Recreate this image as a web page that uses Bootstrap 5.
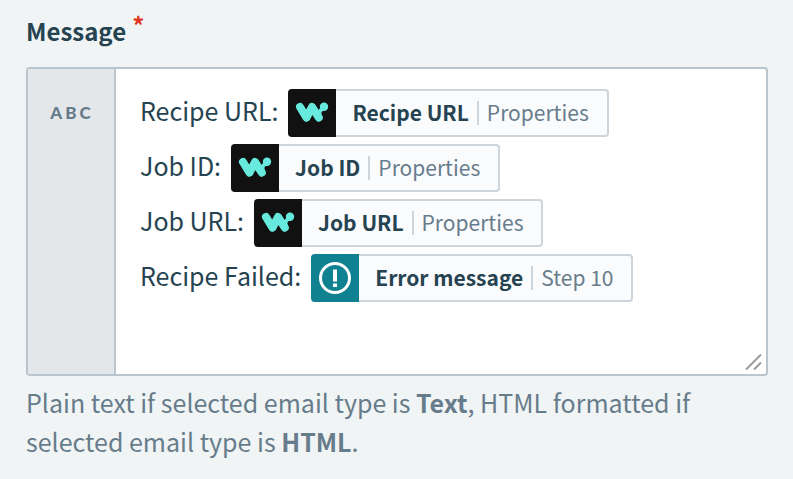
<!DOCTYPE html>
<html lang="en">
<head>
<meta charset="utf-8">
<meta name="viewport" content="width=device-width, initial-scale=1">
<title>Message</title>
<link href="https://cdn.jsdelivr.net/npm/bootstrap@5.3.0/dist/css/bootstrap.min.css" rel="stylesheet">
<style>
  body { background: #f0f4f5; color: #254350; font-family: "Source Sans Pro", "Noto Sans CJK SC", sans-serif; font-size: 25px; line-height: 39px; }
  .message-form { padding: 11px 25px 12px 26px; }
  .field-title { font-size: 24px; font-weight: 700; gap: 6px; margin-bottom: 17px; }
  .required-star { color: #e0371e; line-height: 28px; }
  .editor { min-height: 309px; border: 2px solid #b9c4cd; border-radius: 4px; background: #fff; }
  .type-tag { width: 88px; padding: 24px 0 0 2px; background: #e3e7ea; border-right: 2px solid #b9c4cd; color: #677c8b; font: 900 17px/39px Lato, sans-serif; letter-spacing: 3px; }
  .editor-text { padding: 20px 24px; outline: 0; }
  .editor-line { height: 48px; margin-bottom: 7px; gap: 10px; }
  .editor-line > span:first-child { line-height: 43px; }
  .pill { height: 48px; border: 2px solid #cdd5dc; border-left: 0; border-radius: 4px; background: #fafbfd; font-size: 21px; line-height: 42px; padding-right: 18px; }
  .pill svg { width: 48px; height: 48px; margin: -2px 16px -2px 0; border-radius: 4px 0 0 4px; }
  .pill-source { height: 42px; color: #677c8b; }
  .pill-source::before { content: ""; width: 2px; height: 24px; margin: 2px 8px 0; background: #cdd5dc; }
  .grip { right: 3px; bottom: 3px; width: 18px; height: 18px; }
  .hint { color: #677c8b; margin-top: 7px; }
</style>
<script src="https://cdn.jsdelivr.net/npm/bootstrap@5.3.0/dist/js/bootstrap.bundle.min.js"></script>
</head>
<body>
<svg class="d-none" aria-hidden="true">
  <symbol id="brand" viewBox="0 0 48 48">
    <path fill="#111" d="M0 0h48v48H0z"/>
    <path d="M12 18l6.500 10.700 5.500-10.700 6.800 10.700" fill="none" stroke="#67eadd" stroke-width="8" stroke-linecap="round" stroke-linejoin="round"/>
    <path d="M27 20C29 22.500 31 21.500 32.500 18L36 21.700C33.500 22 32.500 24 34.600 28z" fill="#67eadd"/>
    <circle cx="36" cy="17.800" r="4.200" fill="#67eadd"/>
  </symbol>
  <symbol id="alert" viewBox="0 0 48 48">
    <path fill="#0f8190" d="M0 0h48v48H0z"/>
    <circle cx="24" cy="24" r="14.500" fill="none" stroke="#fff" stroke-width="3"/>
    <path fill="#fff" d="M22 15.500h4v12h-4zM22 29.500h4v3.500h-4z"/>
  </symbol>
</svg>
<main class="message-form">
  <div class="field-title d-flex align-items-start"><span id="message-label">Message</span><span class="required-star">*</span></div>
  <div class="editor d-flex position-relative overflow-hidden">
    <div class="type-tag flex-shrink-0 text-center">ABC</div>
    <div class="editor-text flex-grow-1" contenteditable="true" spellcheck="false" role="textbox" aria-multiline="true" aria-labelledby="message-label" aria-describedby="message-hint">
      <div class="editor-line d-flex"><span>Recipe URL:</span><span class="pill d-flex" contenteditable="false"><svg><use href="#brand"/></svg><strong>Recipe URL</strong><span class="pill-source d-flex align-items-center">Properties</span></span></div>
      <div class="editor-line d-flex"><span>Job ID:</span><span class="pill d-flex" contenteditable="false"><svg><use href="#brand"/></svg><strong>Job ID</strong><span class="pill-source d-flex align-items-center">Properties</span></span></div>
      <div class="editor-line d-flex"><span>Job URL:</span><span class="pill d-flex" contenteditable="false"><svg><use href="#brand"/></svg><strong>Job URL</strong><span class="pill-source d-flex align-items-center">Properties</span></span></div>
      <div class="editor-line d-flex"><span>Recipe Failed:</span><span class="pill d-flex" contenteditable="false"><svg><use href="#alert"/></svg><strong>Error message</strong><span class="pill-source d-flex align-items-center">Step 10</span></span></div>
    </div>
    <svg class="grip position-absolute" viewBox="0 0 18 18" fill="none" stroke="#999" stroke-width="2" aria-hidden="true"><path d="M1 16.500L16 1.500M9 16.500l7-7"/></svg>
  </div>
  <p class="hint mb-0" id="message-hint">Plain text if selected email type is <strong>Text</strong>, HTML formatted if selected email type is <strong>HTML</strong>.</p>
</main>
</body>
</html>
